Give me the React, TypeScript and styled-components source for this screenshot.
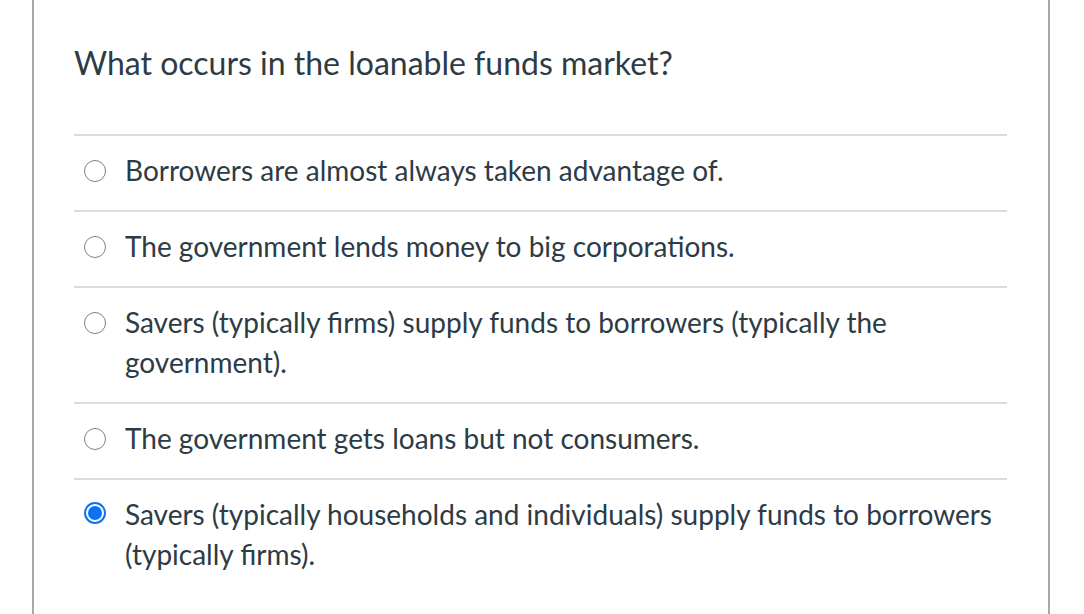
import React from "react";
import styled, { createGlobalStyle } from "styled-components";

const Global = createGlobalStyle`
  html, body { margin: 0; padding: 0; background: #fff; }
  body { font-family: Lato, "Open Sans", sans-serif; color: #2d3b45; }
`;

const Frame = styled.div`
  margin-left: 32px;
  width: 1018px;
  box-sizing: border-box;
  min-height: 614px;
  border-left: 2px solid #a9a9a9;
  border-right: 2px solid #a9a9a9;
  padding: 41px 41px 0 40px;
`;

const Question = styled.div`
  font-size: 32px;
  line-height: 44px;
  margin-bottom: 49px;
`;

const List = styled.div`
  display: flex;
  flex-direction: column;
`;

const Row = styled.label`
  display: flex;
  align-items: flex-start;
  gap: 19px;
  border-top: 2px solid #dcdcdc;
  padding: 14px 0 20px 10px;
  font-size: 28px;
  line-height: 40px;
`;

const Radio = styled.span<{ $checked?: boolean }>`
  flex: none;
  box-sizing: border-box;
  width: 22px;
  height: 22px;
  margin-top: ${(p) => (p.$checked ? 8 : 10)}px;
  border-radius: 50%;
  border: ${(p) => (p.$checked ? "2px solid #0a72f5" : "1.5px solid #808080")};
  display: flex;
  align-items: center;
  justify-content: center;
  &::after {
    content: "";
    display: ${(p) => (p.$checked ? "block" : "none")};
    width: 14px;
    height: 14px;
    border-radius: 50%;
    background: #0a72f5;
  }
`;

const Text = styled.span`
  flex: 1;
`;

const answers = [
  { text: "Borrowers are almost always taken advantage of.", checked: false },
  { text: "The government lends money to big corporations.", checked: false },
  {
    text: "Savers (typically firms) supply funds to borrowers (typically the government).",
    checked: false,
  },
  { text: "The government gets loans but not consumers.", checked: false },
  {
    text: "Savers (typically households and individuals) supply funds to borrowers (typically firms).",
    checked: true,
  },
];

export default function App() {
  return (
    <>
      <Global />
      <Frame>
        <Question>What occurs in the loanable funds market?</Question>
        <List>
          {answers.map((a, i) => (
            <Row key={i}>
              <Radio $checked={a.checked} />
              <Text>{a.text}</Text>
            </Row>
          ))}
        </List>
      </Frame>
    </>
  );
}
